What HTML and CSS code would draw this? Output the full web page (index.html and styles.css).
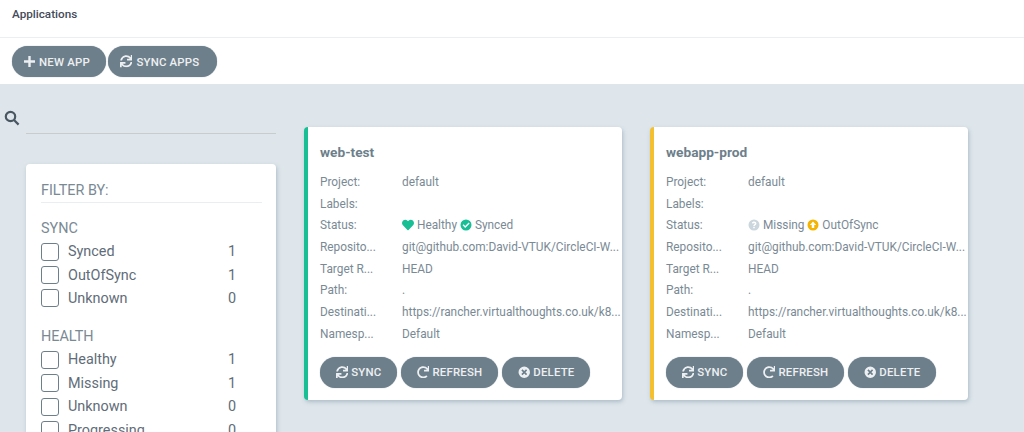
FILE: index.html
```html
<!DOCTYPE html>
<html lang="en">
<head>
<meta charset="utf-8">
<title>Applications</title>
<link rel="stylesheet" href="styles.css">
</head>
<body>
<svg class="defs" width="0" height="0" aria-hidden="true">
  <symbol id="i-sync" viewBox="0 0 512 512"><path d="M440.65 12.57l4 82.77A247.16 247.16 0 0 0 255.83 8C134.73 8 33.91 94.92 12.29 209.82A12 12 0 0 0 24.09 224h49.05a12 12 0 0 0 11.67-9.26 175.91 175.91 0 0 1 317-56.94l-101.46-4.86a12 12 0 0 0-12.57 12v47.41a12 12 0 0 0 12 12H500a12 12 0 0 0 12-12V12a12 12 0 0 0-12-12h-47.37a12 12 0 0 0-11.98 12.57zM255.83 432a175.61 175.61 0 0 1-146-77.8l101.8 4.87a12 12 0 0 0 12.57-12v-47.4a12 12 0 0 0-12-12H12a12 12 0 0 0-12 12V500a12 12 0 0 0 12 12h47.35a12 12 0 0 0 12-12.6l-4.15-82.57A247.17 247.17 0 0 0 255.83 504c121.11 0 221.93-86.92 243.55-201.82a12 12 0 0 0-11.8-14.18h-49.05a12 12 0 0 0-11.67 9.26A175.86 175.86 0 0 1 255.83 432z"/></symbol>
  <symbol id="i-redo" viewBox="0 0 512 512"><path d="M500.33 0h-47.41a12 12 0 0 0-12 12.57l4 82.76A247.42 247.42 0 0 0 256 8C119.34 8 7.9 119.53 8 256.19 8.1 393.07 119.1 504 256 504a247.1 247.1 0 0 0 166.18-63.91 12 12 0 0 0 .48-17.43l-34-34a12 12 0 0 0-16.38-.55A176 176 0 1 1 402.1 157.8l-101.53-4.87a12 12 0 0 0-12.57 12v47.41a12 12 0 0 0 12 12h200.33a12 12 0 0 0 12-12V12a12 12 0 0 0-12-12z"/></symbol>
  <symbol id="i-times" viewBox="0 0 24 24"><path fill-rule="evenodd" d="M12 1a11 11 0 1 0 0 22 11 11 0 0 0 0-22zM8.6 6.4 12 9.8l3.4-3.4 2.2 2.2-3.4 3.4 3.4 3.4-2.2 2.2-3.4-3.4-3.4 3.4-2.2-2.2 3.4-3.4-3.4-3.4z"/></symbol>
  <symbol id="i-heart" viewBox="0 0 512 512"><path d="M462.3 62.6C407.5 15.9 326 24.3 275.7 76.2L256 96.5l-19.7-20.3C186.1 24.3 104.5 15.9 49.7 62.6c-62.8 53.6-66.1 149.8-9.9 207.9l193.5 199.8c12.5 12.9 32.8 12.9 45.3 0l193.5-199.8c56.3-58.1 53-154.3-9.8-207.9z"/></symbol>
  <symbol id="i-check" viewBox="0 0 24 24"><path fill-rule="evenodd" d="M12 1a11 11 0 1 0 0 22 11 11 0 0 0 0-22zM17.3 7l2 2-8.9 8.9-5.2-5.2 2-2 3.2 3.2z"/></symbol>
  <symbol id="i-up" viewBox="0 0 24 24"><path fill-rule="evenodd" d="M12 1a11 11 0 1 0 0 22 11 11 0 0 0 0-22zM12 5.2l6.4 6.6h-3.9v6.4h-5v-6.4H5.6z"/></symbol>
  <symbol id="i-question" viewBox="0 0 24 24"><path fill-rule="evenodd" d="M12 1a11 11 0 1 0 0 22 11 11 0 0 0 0-22zM12.2 5.2c2.7 0 4.6 1.6 4.6 3.9 0 1.7-.9 2.6-2.2 3.4-.9.6-1.1.9-1.1 1.6h-3c0-1.7.6-2.5 1.8-3.3.9-.6 1.4-1 1.4-1.6 0-.7-.6-1.2-1.5-1.2-1 0-1.7.6-2.1 1.5L7.6 8.2c.8-1.9 2.4-3 4.6-3zM10.5 15.4h3v3h-3z"/></symbol>
</svg>

<header class="title-bar"><h1 class="title">Applications</h1></header>

<div class="toolbar">
  <button class="btn btn-large"><svg class="ico ico-plus" viewBox="0 0 12 12"><path d="M4.7 0h2.6v4.7H12v2.6H7.3V12H4.7V7.3H0V4.7h4.7z"/></svg>NEW APP</button>
  <button class="btn btn-large"><svg class="ico"><use href="#i-sync"/></svg>SYNC APPS</button>
</div>

<main class="content">
  <aside class="sidebar">
    <div class="search">
      <svg class="search-icon" viewBox="0 0 16 16"><circle cx="6.5" cy="6.5" r="4.7"/><path d="M10 10l4.6 4.6"/></svg>
      <div class="search-input"></div>
    </div>
    <section class="filters">
      <div class="filters-head">FILTER BY:</div>
      <div class="filter-group">
        <div class="filter-name">SYNC</div>
        <div class="filter-row"><span class="box"></span><span class="filter-label">Synced</span><span class="filter-count">1</span></div>
        <div class="filter-row"><span class="box"></span><span class="filter-label">OutOfSync</span><span class="filter-count">1</span></div>
        <div class="filter-row"><span class="box"></span><span class="filter-label">Unknown</span><span class="filter-count">0</span></div>
      </div>
      <div class="filter-group">
        <div class="filter-name">HEALTH</div>
        <div class="filter-row"><span class="box"></span><span class="filter-label">Healthy</span><span class="filter-count">1</span></div>
        <div class="filter-row"><span class="box"></span><span class="filter-label">Missing</span><span class="filter-count">1</span></div>
        <div class="filter-row"><span class="box"></span><span class="filter-label">Unknown</span><span class="filter-count">0</span></div>
        <div class="filter-row"><span class="box"></span><span class="filter-label">Progressing</span><span class="filter-count">0</span></div>
      </div>
    </section>
  </aside>

  <div class="cards">
    <article class="card card-green">
      <h2 class="card-title">web-test</h2>
      <dl class="props">
        <dt>Project:</dt><dd>default</dd>
        <dt>Labels:</dt><dd></dd>
        <dt>Status:</dt><dd><svg class="st green"><use href="#i-heart"/></svg> Healthy <svg class="st green"><use href="#i-check"/></svg> Synced</dd>
        <dt>Reposito...</dt><dd>git@github.com:David-VTUK/CircleCI-W...</dd>
        <dt>Target R...</dt><dd>HEAD</dd>
        <dt>Path:</dt><dd>.</dd>
        <dt>Destinati...</dt><dd>https://rancher.virtualthoughts.co.uk/k8...</dd>
        <dt>Namesp...</dt><dd>Default</dd>
      </dl>
      <div class="actions">
        <button class="btn"><svg class="ico"><use href="#i-sync"/></svg>SYNC</button>
        <button class="btn"><svg class="ico"><use href="#i-redo"/></svg>REFRESH</button>
        <button class="btn"><svg class="ico"><use href="#i-times"/></svg>DELETE</button>
      </div>
    </article>

    <article class="card card-yellow">
      <h2 class="card-title">webapp-prod</h2>
      <dl class="props">
        <dt>Project:</dt><dd>default</dd>
        <dt>Labels:</dt><dd></dd>
        <dt>Status:</dt><dd><svg class="st grey"><use href="#i-question"/></svg> Missing <svg class="st yellow"><use href="#i-up"/></svg> OutOfSync</dd>
        <dt>Reposito...</dt><dd>git@github.com:David-VTUK/CircleCI-W...</dd>
        <dt>Target R...</dt><dd>HEAD</dd>
        <dt>Path:</dt><dd>.</dd>
        <dt>Destinati...</dt><dd>https://rancher.virtualthoughts.co.uk/k8...</dd>
        <dt>Namesp...</dt><dd>Default</dd>
      </dl>
      <div class="actions">
        <button class="btn"><svg class="ico"><use href="#i-sync"/></svg>SYNC</button>
        <button class="btn"><svg class="ico"><use href="#i-redo"/></svg>REFRESH</button>
        <button class="btn"><svg class="ico"><use href="#i-times"/></svg>DELETE</button>
      </div>
    </article>
  </div>
</main>
</body>
</html>
```

FILE: styles.css
```css
* { box-sizing: border-box; }
html, body { height: 100%; }
body {
  margin: 0;
  height: 432px;
  overflow: hidden;
  display: flex;
  flex-direction: column;
  background: #dee6eb;
  color: #495763;
  font-family: Roboto, "Liberation Sans", sans-serif;
}
.defs { display: block; height: 0; }

.title-bar {
  height: 38px;
  padding: 8px 12px 0;
  background: #fff;
  border-bottom: 1px solid #ebeff2;
}
.title {
  margin: 0;
  font-size: 11.7px;
  line-height: 13px;
  font-weight: 500;
  color: #444b5a;
}

.toolbar {
  height: 46px;
  padding: 8px 12px 0;
  display: flex;
  gap: 2px;
  background: #fff;
  align-items: flex-start;
}

.btn {
  display: inline-flex;
  align-items: center;
  justify-content: center;
  height: 31px;
  padding: 0 15.75px;
  border: 0;
  border-radius: 16px;
  background: #6d7f8b;
  color: #edf0f2;
  font-family: inherit;
  font-size: 11.4px;
  font-weight: 500;
  letter-spacing: 0.2px;
  box-shadow: 0 0 1px #8a99a3;
}
.btn-large { padding: 0 16px 0 12px; }
.btn-large + .btn-large { padding-right: 18px; }
.btn-large .ico { margin-right: 4px; }
.ico {
  width: 12.5px;
  height: 12.5px;
  margin-right: 3px;
  fill: currentColor;
  flex: none;
}
.ico-plus { width: 11px; height: 11px; margin-right: 5px; }

.content {
  flex: 1;
  min-height: 0;
  display: flex;
  align-items: flex-start;
}

.sidebar {
  width: 276px;
  flex: none;
}
.search {
  display: flex;
  align-items: flex-start;
  padding: 26px 0 0 4px;
  height: 80px;
}
.search-icon {
  width: 16px;
  height: 16px;
  flex: none;
  fill: none;
  stroke: #495763;
  stroke-width: 2.2;
}
.search-input {
  flex: 1;
  height: 24px;
  margin-left: 6px;
  border-bottom: 1.5px solid #c8cccd;
}

.filters {
  margin-left: 26px;
  height: 290px;
  padding: 18px 14px 0 15px;
  background: #fff;
  border-radius: 4px;
  box-shadow: 1px 2px 4px rgba(100, 125, 145, .4);
}
.filters-head {
  font-size: 14.4px;
  line-height: 17px;
  color: #7a8a95;
  padding-bottom: 3px;
  border-bottom: 1px solid #e9eef1;
}
.filter-group { margin-top: 17px; }
.filter-group + .filter-group { margin-top: 18px; }
.filter-name {
  font-size: 14.4px;
  line-height: 17px;
  color: #7a8a95;
  margin-bottom: 3px;
}
.filter-row {
  display: flex;
  align-items: center;
  height: 23.4px;
  font-size: 14.4px;
  color: #5f6d79;
}
.box {
  width: 18px;
  height: 18px;
  flex: none;
  border: 1.5px solid #6d7f8b;
  border-radius: 3px;
}
.filter-label { margin-left: 9px; flex: 1; }
.filter-count { width: 18px; margin-right: 16px; }

.cards {
  display: flex;
  gap: 28px;
  padding: 43px 0 0 28px;
}
.card {
  width: 318px;
  height: 273px;
  padding: 0 0 0 12px;
  background: #fff;
  border-left: 4px solid;
  border-radius: 4px;
  box-shadow: 1px 2px 4px rgba(100, 125, 145, .4);
}
.card-green { border-left-color: #18be94; }
.card-yellow { border-left-color: #f4c030; }
.card-title {
  margin: 0;
  padding-top: 17px;
  height: 44px;
  font-size: 13.7px;
  line-height: 16px;
  font-weight: 700;
  color: #6d7f8b;
}
.props {
  margin: 1px 0 0;
  display: grid;
  grid-template-columns: 82px 1fr;
  grid-auto-rows: 21.7px;
  font-size: 11.85px;
  color: #7a8a95;
}
.props dt, .props dd {
  margin: 0;
  line-height: 21.7px;
  white-space: nowrap;
}
.st {
  width: 12px;
  height: 12px;
  vertical-align: -2px;
}
.green { fill: #18be94; }
.yellow { fill: #f4b400; }
.grey { fill: #ccd6dd; }

.actions {
  display: flex;
  gap: 4px;
  margin-top: 11px;
}
```
